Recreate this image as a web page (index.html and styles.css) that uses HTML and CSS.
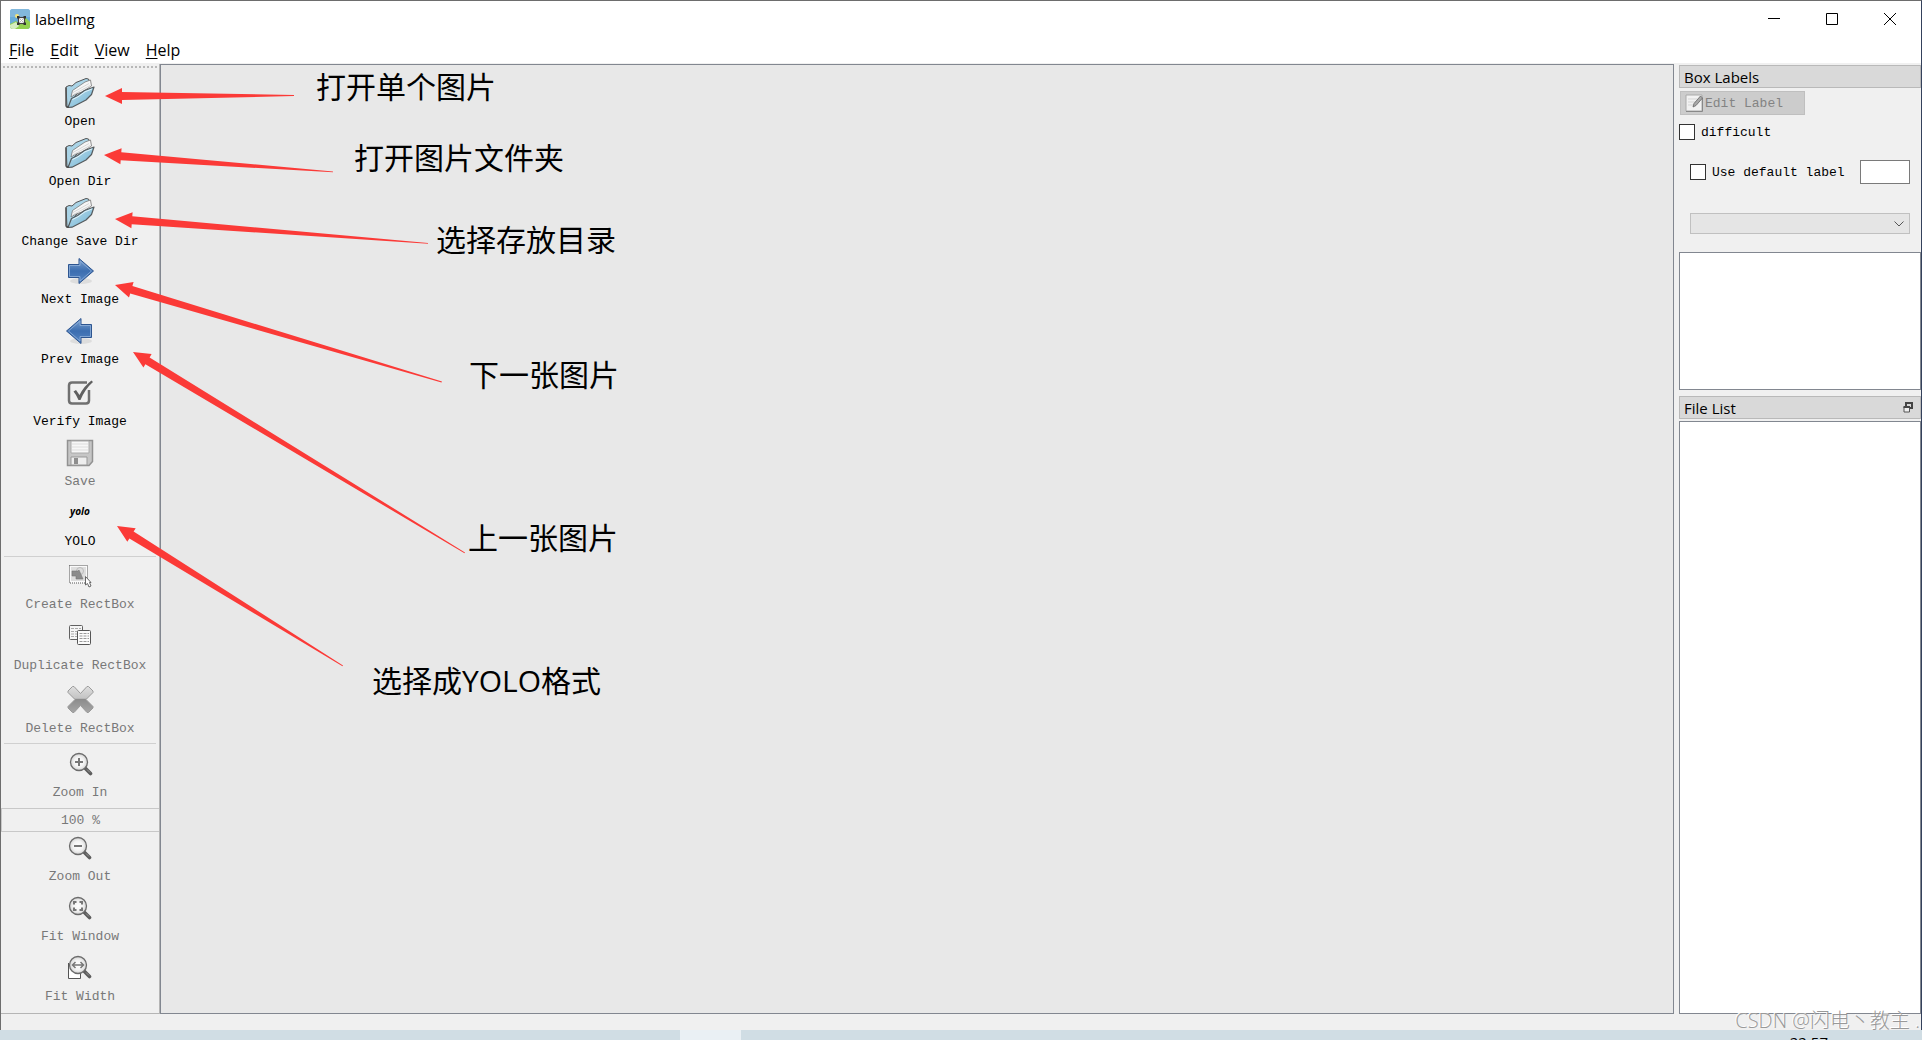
FILE: index.html
```html
<!DOCTYPE html>
<html lang="zh-CN">
<head>
    <meta charset="UTF-8">
    <meta name="viewport" content="width=device-width, initial-scale=1.0">
    <title>labelImg</title>
    <link rel="stylesheet" href="styles.css">
</head>
<body>
    <!-- Shared icon shapes -->
    <svg class="defs" width="0" height="0" aria-hidden="true">
        <defs>
            <linearGradient id="folderBlue" x1="0" y1="0" x2="1" y2="1">
                <stop offset="0" stop-color="#c3e3f1"/>
                <stop offset="0.6" stop-color="#8fc4dd"/>
                <stop offset="1" stop-color="#4f96ba"/>
            </linearGradient>
            <linearGradient id="arrowBlue" x1="0" y1="0" x2="0" y2="1">
                <stop offset="0" stop-color="#7fa3d0"/>
                <stop offset="0.5" stop-color="#3c6eb0"/>
                <stop offset="1" stop-color="#5585c4"/>
            </linearGradient>
            <linearGradient id="crossGray" x1="0" y1="0" x2="0" y2="1">
                <stop offset="0" stop-color="#dedede"/>
                <stop offset="0.45" stop-color="#c4c4c4"/>
                <stop offset="0.5" stop-color="#8c8c8c"/>
                <stop offset="1" stop-color="#a6a6a6"/>
            </linearGradient>
            <radialGradient id="lens">
                <stop offset="0" stop-color="#ffffff"/>
                <stop offset="0.6" stop-color="#f2f2f2"/>
                <stop offset="1" stop-color="#d2d2d2"/>
            </radialGradient>
            <symbol id="folder" viewBox="0 0 32 32">
                <path d="M2 10 5 8.500 8 9 12 5.500 22 1.500 24.500 2 26 6 12 18 6 28 3 30z" fill="#a9d3e6" stroke="#555" stroke-linejoin="round"/>
                <path d="M7 20 8.500 13.500 21 5 26.500 3 27.500 9 18 15 12 17z" fill="#f6f6f6" stroke="#777" stroke-width=".8"/>
                <path d="M9 15.500 25 6.500M8.500 18 26 8.500" stroke="#cfcfcf" stroke-width=".8"/>
                <path d="M4 30.500 7.500 21.500 13.500 18.500 20.500 13.500 30 10 27.500 17.500 22 23 8 30.200z" fill="url(#folderBlue)" stroke="#565b5e" stroke-width="1.200" stroke-linejoin="round"/>
                <path d="M2 10.500V28.500Q2.200 30.800 5 30" fill="none" stroke="#505050" stroke-width="1.500"/>
                <path d="M8.500 22.500 14 19.800 21 14.800 28 12" fill="none" stroke="#dff2fa"/>
            </symbol>
            <symbol id="glass" viewBox="0 0 24 24">
                <path d="M16.500 16.500 21.500 21.500" stroke="#5c5c5c" stroke-width="3.600" stroke-linecap="round"/>
                <path d="M18 17.500 21 20.500" stroke="#999"/>
                <circle cx="10" cy="10" r="8.500" fill="url(#lens)" stroke="#6b6b6b" stroke-width="1.300"/>
            </symbol>
        </defs>
    </svg>

    <div class="window">
        <header class="titlebar">
            <svg class="app-icon" viewBox="0 0 20 20">
                <rect width="20" height="20" rx="3" fill="#69acd8"/>
                <path d="M0 3Q0 0 3 0H17Q20 0 20 3V8H0z" fill="#82b8dc"/>
                <path d="M0 15 6 12 10 15 15 8 20 13V17Q20 20 17 20H3Q0 20 0 17z" fill="#92d050"/>
                <path d="M0 16 6 13 9 17 5 20H3Q0 20 0 17z" fill="#d5edbf"/>
                <circle cx="7" cy="7" r="2" fill="#f5e479"/>
                <rect x="8.500" y="8.500" width="6" height="6" fill="#fff" stroke="#444" stroke-width="1.200"/>
                <path d="M7 7h2.500v2.500H7zM13.500 7H16v2.500h-2.500zM7 13.500h2.500V16H7zM13.500 13.500H16V16h-2.500z" fill="#333"/>
                <path d="M10 10 13 13M13 10 10 13" stroke="#bbb"/>
            </svg>
            <h1>labelImg</h1>
            <div class="window-controls">
                <button aria-label="Minimize"><svg viewBox="0 0 12 12"><path d="M0 5.500H12"/></svg></button>
                <button aria-label="Maximize"><svg viewBox="0 0 12 12"><path d="M.5.500H11.500V11.500H.5z"/></svg></button>
                <button aria-label="Close"><svg viewBox="0 0 12 12"><path d="M0 0 12 12M12 0 0 12"/></svg></button>
            </div>
        </header>

        <nav class="menubar">
            <button><u>F</u>ile</button>
            <button><u>E</u>dit</button>
            <button><u>V</u>iew</button>
            <button><u>H</u>elp</button>
        </nav>

        <main class="workspace">
            <div class="toolbar">
                <div class="handle"></div>
                <button class="tool"><svg class="icon-32"><use href="#folder"/></svg>Open</button>
                <button class="tool"><svg class="icon-32"><use href="#folder"/></svg>Open Dir</button>
                <button class="tool"><svg class="icon-32"><use href="#folder"/></svg>Change Save Dir</button>
                <button class="tool">
                    <svg class="icon-30" viewBox="0 0 30 30">
                        <ellipse cx="16" cy="24" rx="11" ry="3" fill="#ddd"/>
                        <path d="M3.500 7.500H14V1.500L28.500 14 14 26.500V20.500H3.500z" fill="url(#arrowBlue)" stroke="#2d5590"/>
                        <path d="M4.500 8.500H15V4L26.500 14 15 24V19.500H4.500z" fill="none" stroke="#8fb0d9" stroke-width=".8"/>
                    </svg>Next Image
                </button>
                <button class="tool">
                    <svg class="icon-32" viewBox="0 0 32 32">
                        <ellipse cx="17" cy="26" rx="11" ry="3" fill="#ddd"/>
                        <path d="M27.500 9.500H17V3.500L2.500 16 17 28.500V22.500H27.500z" fill="url(#arrowBlue)" stroke="#2d5590"/>
                        <path d="M26.500 10.500H16V6L4.500 16 16 26V21.500H26.500z" fill="none" stroke="#8fb0d9" stroke-width=".8"/>
                    </svg>Prev Image
                </button>
                <button class="tool">
                    <svg class="icon-34" viewBox="0 0 34 34">
                        <path d="M24 7.500H9Q6 7.500 6 10.500V25.500Q6 28.500 9 28.500H23Q26 28.500 26 25.500V15" fill="none" stroke="#707070" stroke-width="2.500"/>
                        <path d="M10.500 16.500 13 15 16.500 20Q21 11 28.500 5.500L30 7Q22 14 17.500 25H15.500Q13.500 20 10.500 16.500z" fill="#606060"/>
                    </svg>Verify Image
                </button>
                <button class="tool" disabled>
                    <svg class="icon-32" viewBox="0 0 32 32">
                        <path d="M3.500 3.500H28.500V24.500L25 28.500H3.500z" fill="#c6c6c6" stroke="#929292" stroke-width="1.500"/>
                        <path d="M7 4H25V16H7z" fill="#f7f7f7" stroke="#aaa"/>
                        <path d="M8 7H24M8 10H24M8 13H24" stroke="#ddd"/>
                        <path d="M7 20H23V28H7z" fill="#eee" stroke="#999"/>
                        <path d="M10 21H14V27H10z" fill="#8e8e8e"/>
                    </svg>Save
                </button>
                <button class="tool"><span class="yolo-mark">yolo</span>YOLO</button>
                <hr>
                <button class="tool" disabled>
                    <svg class="icon-28" viewBox="0 0 28 28">
                        <path d="M3.500 1.500H21.500V19H3.500z" fill="#fafafa" stroke="#555" stroke-dasharray="1 1"/>
                        <path d="M5 3H20V17H5z" fill="#dedede"/>
                        <circle cx="14" cy="7" r="3.500" fill="#ddd" stroke="#bbb"/>
                        <path d="M6 7H12L13 6 17 15H10V12H6z" fill="#8c8c8c" stroke="#777" stroke-width=".6"/>
                        <path d="M19.500 12.500V21L21.500 19.500 23 23 25 22 23.500 18.500H25z" fill="#fff" stroke="#666"/>
                    </svg>Create RectBox
                </button>
                <button class="tool" disabled>
                    <svg class="icon-33" viewBox="0 0 33 33">
                        <rect x="5.500" y="5.500" width="13" height="14" rx="1" fill="#f5f5f5" stroke="#616161"/>
                        <path d="M7 8.500H17M7 11.500H16M7 14H16M7 16.500H16" stroke="#aaa" stroke-dasharray="3 1"/>
                        <rect x="13.500" y="10.500" width="13" height="14" rx="1" fill="#fbfbfb" stroke="#555"/>
                        <path d="M15.500 13.500H25M15.500 16H25M15.500 18.500H25M15.500 21.500H25" stroke="#999" stroke-dasharray="3 1"/>
                    </svg>Duplicate RectBox
                </button>
                <button class="tool" disabled>
                    <svg class="icon-35" viewBox="0 0 35 35">
                        <path d="M5 10 9.500 5.500H11L17.500 12.500 24 5.500H25.500L30 10V11.500L23 18.500 30 25.500V27L25.500 31.500H24L17.500 24.500 11 31.500H9.500L5 27V25.500L12 18.500 5 11.500z" fill="url(#crossGray)" stroke="#9a9a9a" stroke-linejoin="round"/>
                    </svg>Delete RectBox
                </button>
                <hr>
                <button class="tool" disabled>
                    <svg class="icon-29" viewBox="0 0 29 29"><use href="#glass" x="3" y="1" width="24" height="24"/><path d="M9 11H17M13 7V15" stroke="#777" stroke-width="2"/></svg>Zoom In
                </button>
                <input class="zoom-value" type="text" value="100 %" aria-label="Zoom level" disabled>
                <button class="tool" disabled>
                    <svg class="icon-28" viewBox="0 0 28 28"><use href="#glass" x="2" y="0" width="24" height="24"/><path d="M8 10H16" stroke="#777" stroke-width="2"/></svg>Zoom Out
                </button>
                <button class="tool" disabled>
                    <svg class="icon-32" viewBox="0 0 32 32"><use href="#glass" x="4" y="4" width="24" height="24"/><path d="M10 12.500V10H12.500M15.500 10H18V12.500M18 15.500V18H15.500M12.500 18H10V15.500" fill="none" stroke="#777" stroke-width="2"/></svg>Fit Window
                </button>
                <button class="tool" disabled>
                    <svg class="icon-32" viewBox="0 0 32 32"><path d="M4.500 11V26.500H16.500V20" fill="#fff" stroke="#555"/><use href="#glass" x="4" y="3" width="24" height="24"/><path d="M8.500 13H19.500M11.500 10 8.500 13 11.500 16M16.500 10 19.500 13 16.500 16" fill="none" stroke="#777" stroke-width="1.500"/></svg>Fit Width
                </button>
            </div>

            <section class="canvas" aria-label="Image"></section>

            <aside class="docks">
                <h2 class="dock-title">Box Labels</h2>
                <div class="label-tools">
                    <button class="edit-label" disabled>
                        <svg viewBox="0 0 18 18">
                            <path d="M1 1H17V17H1z" fill="#f2f2f2" stroke="#aaa"/>
                            <path d="M3 5H12M3 8H11M3 11H9" stroke="#d5d5d5"/>
                            <path d="M1 17.500H17.500V4" fill="none" stroke="#888"/>
                            <path d="M8 13 9 9.500 15.500 2 17.500 4 11 11.500z" fill="#aaa" stroke="#666" stroke-width=".8"/>
                        </svg>Edit Label
                    </button>
                    <label class="check"><input type="checkbox">difficult</label>
                    <div class="default-row">
                        <label class="check"><input type="checkbox">Use default label</label>
                        <input class="default-label" type="text" aria-label="Default label">
                    </div>
                    <div class="combo">
                        <select aria-label="Label filter" disabled></select>
                        <svg viewBox="0 0 10 6"><path d="M.5.500 5 5 9.500.5" fill="none" stroke="#555"/></svg>
                    </div>
                </div>
                <div class="list label-list"></div>
                <h2 class="dock-title file-title">File List
                    <button aria-label="Float">
                        <svg viewBox="0 0 10 11"><path d="M3 4V1H9V6H7" fill="none" stroke="#444" stroke-width="2"/><path d="M1 5H6.500V10H1z" fill="#eee" stroke="#555"/><path d="M.5 5H7" stroke="#444" stroke-width="2"/></svg>
                    </button>
                </h2>
                <div class="list file-list"></div>
            </aside>
        </main>

        <footer class="statusbar"></footer>
    </div>

    <div class="taskbar">
        <div class="task-active"></div>
        <span class="clock">22:57</span>
    </div>

    <!-- Notes pinned over the window -->
    <div class="notes">
        <svg class="arrows">
            <path d="M105 96 122 88V92L294 95V96L122 100V104z"/>
            <path d="M104 155 121.600 148.300 121.300 152.300 333 171.500V172.300L120.700 160.300 120.400 164.300z"/>
            <path d="M115 219 132.600 212.300 132.300 216.300 428 243V243.800L131.700 224.300 131.400 228.300z"/>
            <path d="M115 285 133.600 282.100 132.400 286 442 381.500 441.500 382.500 130.200 293.600 129 297.500z"/>
            <path d="M133 352 151.600 354 149.600 357.400 465 552.500 464.500 553.300 145.400 364.200 143.400 367.600z"/>
            <path d="M117 526 135.700 528.200 133.600 531.600 343 665.500 342.500 666.300 129.400 538.400 127.300 541.800z"/>
        </svg>
        <p class="note note-open">打开单个图片</p>
        <p class="note note-dir">打开图片文件夹</p>
        <p class="note note-save">选择存放目录</p>
        <p class="note note-next">下一张图片</p>
        <p class="note note-prev">上一张图片</p>
        <p class="note note-yolo">选择成YOLO格式</p>
        <p class="watermark">CSDN @闪电丶教主 .</p>
    </div>
</body>
</html>
```

FILE: styles.css
```css
* {
    margin: 0;
    padding: 0;
    box-sizing: border-box;
}

body {
    height: 100vh;
    display: flex;
    flex-direction: column;
    position: relative;
    overflow: hidden;
    background: #f0f0f0;
    color: #000;
    font-family: "Open Sans", "Noto Sans CJK SC", sans-serif;
    font-size: 15px;
}

button {
    border: none;
    background: none;
    color: inherit;
    font: inherit;
}

.defs {
    position: absolute;
}

.window {
    flex: 1;
    min-height: 0;
    display: flex;
    flex-direction: column;
    border: 1px solid #6d6d6d;
    border-right-color: #34415c;
    border-bottom: none;
}

/* Title bar and menus */
.titlebar {
    height: 36px;
    display: flex;
    align-items: center;
    padding: 0 2px 0 9px;
    gap: 5px;
    background: white;
}

.app-icon {
    width: 20px;
    height: 20px;
}

.titlebar h1 {
    font-size: 15px;
    font-weight: 400;
}

.window-controls {
    display: flex;
    margin-left: auto;
}

.window-controls button {
    width: 58px;
    height: 36px;
}

.window-controls svg {
    width: 12px;
    height: 12px;
    fill: none;
    stroke: #000;
}

.menubar {
    height: 26px;
    display: flex;
    align-items: center;
    gap: 16px;
    padding-left: 8px;
    background: white;
    font-size: 16px;
}

.menubar u {
    text-underline-offset: 2px;
}

/* Main area */
.workspace {
    flex: 1;
    min-height: 0;
    display: flex;
    padding-top: 1px;
}

.toolbar {
    width: 159px;
    display: flex;
    flex-direction: column;
    border-right: 1px solid #b5b5b5;
    border-bottom: 1px solid #b5b5b5;
    font-family: "Liberation Mono", monospace;
    font-size: 13px;
    line-height: 16px;
}

.handle {
    height: 2px;
    margin: 2px 2px 5px;
    background: repeating-linear-gradient(90deg, #b8b8b8 0 2px, transparent 2px 4px);
}

.tool {
    display: flex;
    flex-direction: column;
    align-items: center;
    gap: 5px;
    padding: 4px 0 3px;
    white-space: nowrap;
}

.tool:disabled {
    color: #787878;
}

.icon-28 {
    width: 28px;
    height: 28px;
}

.icon-29 {
    width: 29px;
    height: 29px;
}

.icon-30 {
    width: 30px;
    height: 30px;
}

.icon-32 {
    width: 32px;
    height: 32px;
}

.icon-33 {
    width: 33px;
    height: 33px;
}

.icon-34 {
    width: 34px;
    height: 34px;
}

.icon-35 {
    width: 35px;
    height: 35px;
}

.yolo-mark {
    height: 32px;
    font: italic bold 10px/28px "Open Sans", sans-serif;
}

.toolbar hr {
    height: 1px;
    margin: 3px;
    border: none;
    background: #d0d0d0;
}

.zoom-value {
    width: 100%;
    height: 24px;
    margin-top: 4px;
    border: 1px solid #c8c8c8;
    border-right: none;
    background: #f0f0f0;
    color: #787878;
    font: inherit;
    text-align: center;
}

.canvas {
    flex: 1;
    border: 1px solid #828790;
    background: #e8e8e8;
}

/* Right docks */
.docks {
    width: 247px;
    display: flex;
    flex-direction: column;
    padding: 1px 0 0 5px;
}

.dock-title {
    height: 23px;
    display: flex;
    align-items: center;
    justify-content: space-between;
    padding: 0 7px 0 4px;
    border: 1px solid #b9b9b9;
    background: #d9d9d9;
    font-size: 15px;
    font-weight: 400;
    line-height: 20px;
}

.dock-title button {
    display: flex;
}

.dock-title svg {
    width: 10px;
    height: 11px;
}

.label-tools {
    display: flex;
    flex-direction: column;
    align-items: flex-start;
    padding-top: 3px;
    font-family: "Liberation Mono", monospace;
    font-size: 13px;
}

.edit-label {
    width: 125px;
    height: 24px;
    display: flex;
    align-items: center;
    gap: 2px;
    margin-left: 1px;
    padding-left: 4px;
    border: 1px solid #bfbfbf;
    background: #ccc;
    color: #838383;
}

.edit-label svg {
    width: 18px;
    height: 18px;
}

.label-tools > .check {
    margin-top: 9px;
}

.check {
    display: flex;
    align-items: center;
    gap: 6px;
    white-space: nowrap;
}

.check input {
    appearance: none;
    width: 16px;
    height: 16px;
    border: 1px solid #333;
    background: white;
}

.default-row {
    align-self: stretch;
    display: flex;
    align-items: center;
    justify-content: space-between;
    margin: 20px 11px 0;
}

.default-label {
    width: 50px;
    height: 24px;
    border: 1px solid #7a7a7a;
    background: white;
}

.combo {
    align-self: stretch;
    position: relative;
    margin: 29px 11px 18px;
}

.combo select {
    display: block;
    appearance: none;
    width: 100%;
    height: 21px;
    border: 1px solid #adadad;
    background: #e1e1e1;
}

.combo svg {
    position: absolute;
    top: 8px;
    right: 6px;
    width: 10px;
    height: 6px;
}

.list {
    border: 1px solid #828790;
    background: white;
}

.label-list {
    height: 138px;
}

.file-title {
    margin: 6px 0 2px;
}

.file-list {
    flex: 1;
}

.statusbar {
    height: 16px;
}

/* Desktop strip under the window */
.taskbar {
    height: 10px;
    display: flex;
    justify-content: space-between;
    padding: 0 94px 0 680px;
    overflow: hidden;
    background: #d0dde4;
}

.task-active {
    width: 61px;
    background: #eaf0f4;
}

.clock {
    padding-top: 4px;
    font-size: 15px;
    line-height: 16px;
}

/* Notes */
.notes {
    position: absolute;
    inset: 0;
    pointer-events: none;
}

.arrows {
    width: 100%;
    height: 100%;
    fill: #fb3a37;
}

.note {
    position: absolute;
    font-family: "Open Sans", "Noto Sans CJK SC", sans-serif;
    font-size: 30px;
    line-height: 40px;
    white-space: nowrap;
}

.note-open {
    left: 316px;
    top: 67px;
}

.note-dir {
    left: 354px;
    top: 138px;
}

.note-save {
    left: 436px;
    top: 220px;
}

.note-next {
    left: 469px;
    top: 355px;
}

.note-prev {
    left: 468px;
    top: 518px;
}

.note-yolo {
    left: 372px;
    top: 661px;
}

.watermark {
    position: absolute;
    right: 2px;
    bottom: 7px;
    color: #999;
    font-family: "Open Sans", "Noto Sans CJK SC", sans-serif;
    font-size: 20px;
    font-weight: 300;
    line-height: 24px;
    text-shadow: -1px -1px 0 #fff;
}
```
